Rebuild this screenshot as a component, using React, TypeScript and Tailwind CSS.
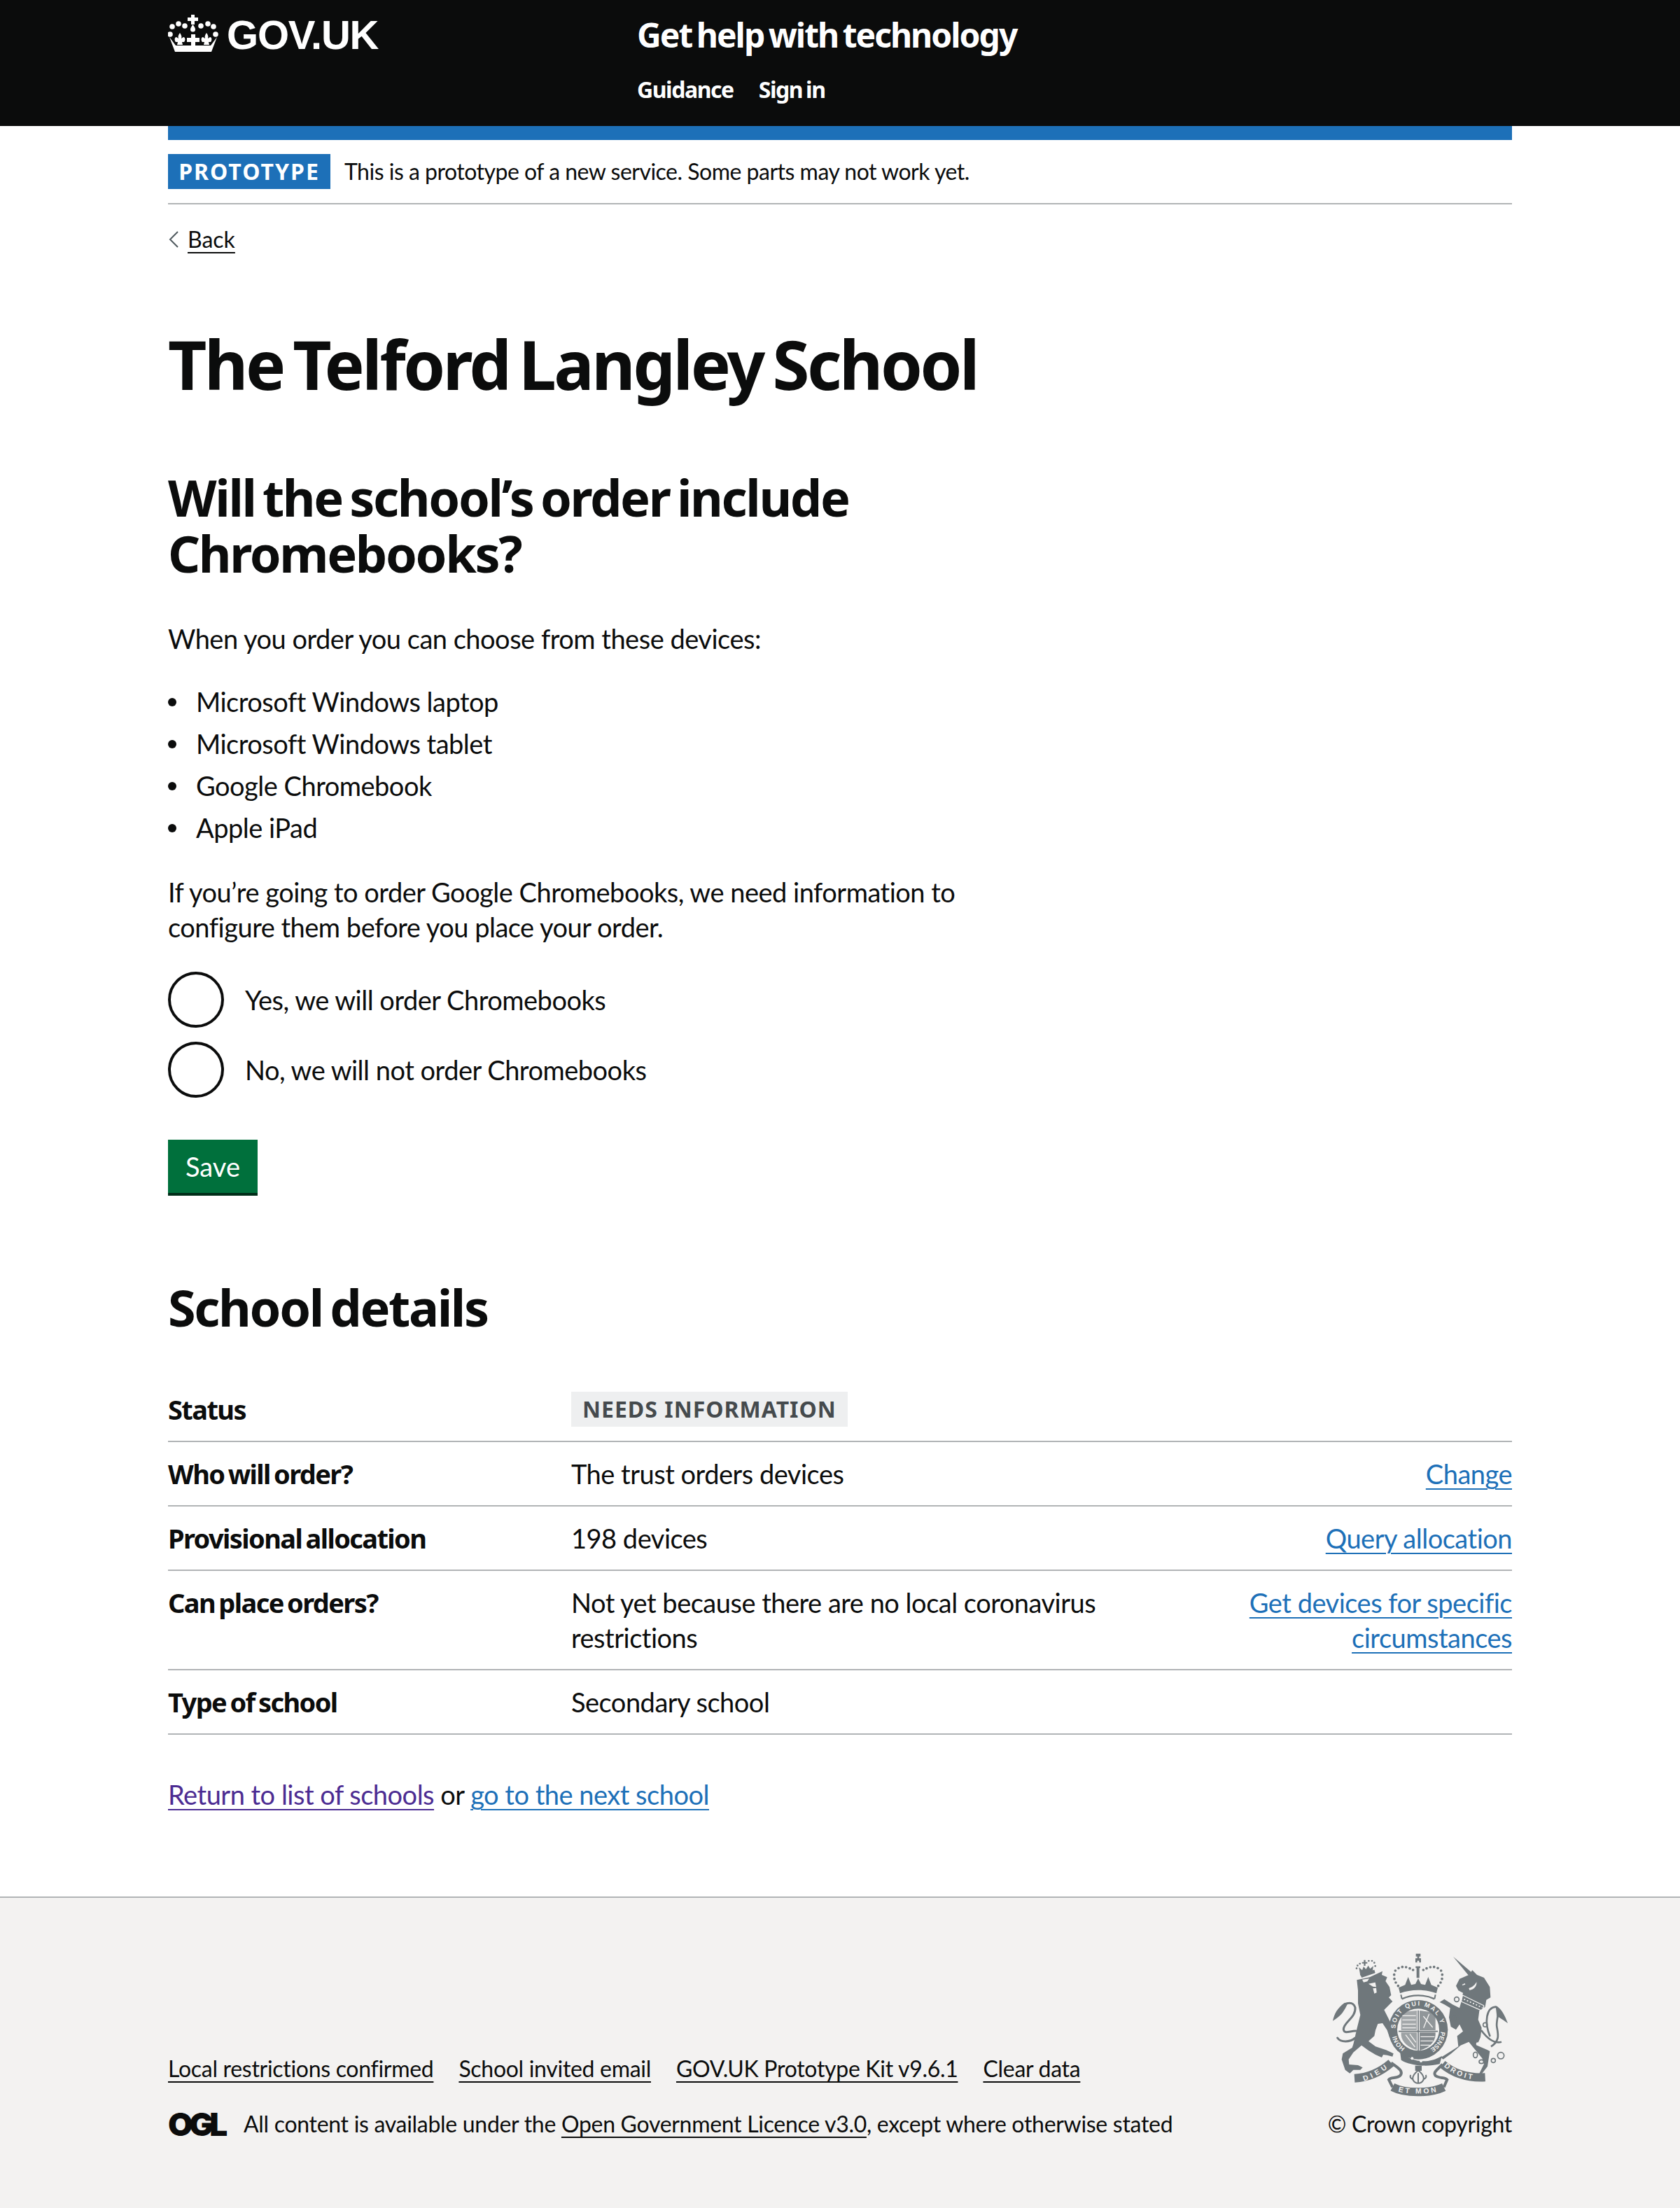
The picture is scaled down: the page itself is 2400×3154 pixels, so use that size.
const heading = "font-['Noto_Sans',sans-serif] font-bold";

function Crown() {
  const dots = [
    [6, 16],
    [15, 12],
    [24, 15],
    [47, 15],
    [57, 12],
    [65, 16],
    [3, 27],
    [68, 27],
  ];
  return (
    <svg width="72" height="53" viewBox="0 -1 72 53" fill="#fff" className="shrink-0">
      {dots.map(([x, y]) => (
        <circle key={`${x}-${y}`} cx={x} cy={y} r="3.8" />
      ))}
      <path d="M33 -1h5v4h5v5h-5v5h-5V8h-5V3h5z" />
      <path d="M35.5 13c2 3 3.5 5 3.5 7a3.5 3.5 0 0 1-7 0c0-2 1.5-4 3.5-7z" />
      {[17, 55].map((x) => (
        <path
          key={x}
          d={`M${x} 25c2 3 3 5 2 8l3-2c3 0 3 5 1 7h-3l1 4h-8l1-4h-3c-2-2-2-7 1-7l3 2c-1-3 0-5 2-8z`}
        />
      ))}
      <path d="M33 27h6v5h6v6h-6v5h-6v-5h-6v-6h6z" />
      <path d="M2 31l6 8 3 4h50l3-4 6-8-8 21H10z" />
    </svg>
  );
}

function Arms() {
  const c = "#6f777b";
  const bg = "#f3f2f1";
  return (
    <svg width="260" height="210" viewBox="0 0 780 630" className="block">
      {/* lion */}
      <path
        fill={c}
        d="M115 130L170 118L225 92L222 108L245 118L238 135L255 160L262 195L252 205L268 222L258 232L232 258L258 310L278 345L285 378L272 392L255 375L245 345L225 315L205 318L195 345L190 370L165 392L195 415L240 430L272 445L268 458L245 452L228 450L222 462L195 450L165 432L135 410L100 440L80 470L82 492L120 495L140 505L130 515L100 515L85 530L65 515L50 470L55 445L95 420L100 405L115 340L130 280L120 230L120 175Z"
      />
      <path fill={bg} d="M138 128L168 124L160 136L144 140ZM165 146L194 140L198 160L184 158ZM184 166L198 164L200 184L190 188Z" />
      <path
        fill="none"
        stroke={c}
        strokeWidth="9"
        strokeLinecap="round"
        d="M108 378C85 398 45 398 32 378M110 348C80 350 58 362 58 340C60 310 112 290 108 248C100 222 70 222 52 248"
      />
      <path fill={c} d="M12 305C18 275 32 250 62 228L78 226C62 262 48 285 12 305Z" />
      {/* lion crown */}
      <path fill={c} d="M128 104L190 86L194 100L136 120Z" />
      <g fill={c}>
        {[[114, 80], [118, 68], [128, 60], [166, 48], [180, 48], [190, 56], [194, 70]].map(([x, y]) => (
          <circle key={`${x}-${y}`} cx={x} cy={y} r="4" />
        ))}
        <path d="M145 44h7v9h8v6h-8v10h-7v-10h-8v-6h8zM124 76l14 12 6-16 10 12 10-16 8 14 14-12-4 22-52 18z" />
      </g>
      {/* everything round the shield, in coords of the wider crop */}
      <g transform="translate(-120 -75)">
        <defs>
          <path id="garter-top" d="M401 413A97 97 0 0 1 595 410" />
          <path id="garter-right" d="M595 426A97 97 0 0 1 539 506" />
          <path id="garter-bot" d="M442 497A97 97 0 0 1 401 426" />
          <path id="ribbon-l" d="M265 638C310 625 345 600 380 572" />
          <path id="ribbon-m" d="M412 682C450 695 540 695 582 682" />
          <path id="ribbon-r" d="M608 575C650 612 700 632 760 632" />
        </defs>
        {/* crown */}
        <path fill={c} d="M488 92h20v12h-6v8h8v18h-8v-8h-8v8h-8v-18h8v-8h-6z" />
        <path fill={c} d="M487 146h20v8h-4v42h-12v-42h-4z" />
        <g fill={c}>
          {[
            [400, 165], [414, 154], [430, 149], [446, 150], [462, 155], [476, 162],
            [395, 182], [396, 200], [402, 216], [412, 230],
            [520, 162], [534, 155], [550, 150], [566, 149], [582, 154], [596, 165],
            [601, 182], [600, 200], [594, 216], [584, 230],
          ].map(([x, y]) => (
            <circle key={`${x}-${y}`} cx={x} cy={y} r="5.5" />
          ))}
        </g>
        <path
          fill={c}
          d="M414 238L442 226L455 192L468 226L486 222L498 198L510 222L528 226L541 192L554 226L582 238L576 262C530 244 466 244 420 262Z"
        />
        <path fill="none" stroke={c} strokeWidth="7" d="M428 286C470 266 526 266 568 286" />
        <path fill="none" stroke={c} strokeWidth="6" d="M424 268L428 286M572 268L568 286" />
        {/* garter */}
        <circle cx="498" cy="418" r="127" fill={c} />
        <circle cx="498" cy="418" r="90" fill={bg} />
        <g fill={bg} fontFamily="Liberation Sans, sans-serif" fontWeight="700" fontSize="27">
          <text>
            <textPath href="#garter-top" textLength="285">SOIT QUI MAL Y</textPath>
          </text>
          <text>
            <textPath href="#garter-right">PENSE</textPath>
          </text>
          <text>
            <textPath href="#garter-bot">HONI</textPath>
          </text>
        </g>
        {/* shield */}
        <path d="M492 345V420H425V345C450 340 470 338 492 336Z" fill={c} opacity=".6" />
        <path d="M504 336C526 338 550 342 572 346V420H504Z" fill={c} opacity=".75" />
        <path d="M425 430H492V505C460 495 428 475 425 440Z" fill={c} opacity=".65" />
        <path d="M504 430H572V440C570 475 540 495 504 508Z" fill={c} opacity=".85" />
        <g stroke={bg} strokeWidth="4">
          <path d="M430 358h58M430 376h58M430 394h58M430 410h58M508 448h60M508 466h54M508 484h40M444 440l40 52M462 436l26 36" />
          <path d="M520 360l40 48M545 350l-24 60" />
        </g>
        <path d="M498 335V520M414 425H582" stroke={c} strokeWidth="5" />
        {/* buckle */}
        <path fill={c} d="M420 510C470 560 540 566 600 530L590 565C530 580 460 570 425 548Z" />
        <circle cx="472" cy="541" r="6" fill={bg} />
        <circle cx="510" cy="552" r="6" fill={bg} />
        {/* motto */}
        <path
          fill="none"
          stroke={c}
          strokeWidth="36"
          d="M225 626C290 622 345 592 382 560M388 664C440 692 550 692 608 664M602 566C650 606 710 626 785 622"
        />
        <path
          fill="none"
          stroke={c}
          strokeWidth="12"
          d="M382 560C410 580 438 596 420 615C405 628 380 620 372 632L388 664M602 566C580 590 560 600 572 615C590 628 612 620 622 632L608 664"
        />
        <g fill={bg} fontFamily="Liberation Sans, sans-serif" fontWeight="700" fontSize="31">
          <text>
            <textPath href="#ribbon-l" textLength="115">DIEU</textPath>
          </text>
          <text>
            <textPath href="#ribbon-m" textLength="165">ET MON</textPath>
          </text>
          <text>
            <textPath href="#ribbon-r" textLength="135">DROIT</textPath>
          </text>
        </g>
        <path fill={c} d="M485 572h28v22h-28z" />
        <path
          fill="none"
          stroke={c}
          strokeWidth="6"
          d="M498 592C512 604 526 622 520 634C510 652 486 652 476 634C470 622 484 604 498 592ZM498 604V650M466 612C460 622 470 632 478 628M530 612C536 622 526 632 518 628"
        />
      </g>
      {/* unicorn */}
      <g transform="translate(390 0)">
        <path fill={c} d="M138 30L218 98L205 112Z" />
        <path
          fill={c}
          d="M150 155L165 125L205 108L220 88L240 108L270 120L295 160L298 205L280 215L275 245L250 262L245 300L260 335L255 375L240 410L285 430L295 435L285 500L262 530L248 535L270 490L262 465L225 420L205 395L170 410L130 445L95 470L85 462L120 440L160 415L155 370L180 350L165 320L150 343L128 330L120 290L125 250L100 235L80 225L100 212L135 235L165 250L175 215L180 185L160 175Z"
        />
        <path fill="none" stroke={bg} strokeWidth="4" d="M178 195L270 240M172 222L262 262M178 195L172 222M270 240L262 262" />
        <path fill="none" stroke={bg} strokeWidth="5" strokeDasharray="6 8" d="M184 212L262 248" />
        <path fill={bg} d="M205 165C222 160 232 150 238 138C240 156 228 170 208 174ZM176 150l12-6 2 5-12 4z" />
        <circle cx="267" cy="369" r="7" fill={bg} />
        <circle cx="243" cy="404" r="7" fill={bg} />
        <g fill="none" stroke={c} strokeWidth="5">
          <circle cx="153" cy="213" r="10" />
          <circle cx="143" cy="297" r="10" />
          <circle cx="275" cy="322" r="9" />
          <ellipse cx="233" cy="451" rx="9" ry="12" />
          <ellipse cx="259" cy="480" rx="10" ry="8" />
          <circle cx="310" cy="475" r="9" />
          <circle cx="342" cy="454" r="14" />
        </g>
        <path
          fill="none"
          stroke={c}
          strokeWidth="8"
          d="M258 345C280 375 310 405 345 395M296 372C270 310 280 248 320 245C345 250 320 300 325 330C330 360 340 390 300 415"
        />
        <path fill={c} d="M320 242C345 248 360 285 372 315C350 300 335 290 325 285Z" />
      </g>
    </svg>
  );
}

function Row({
  label,
  value,
  action,
}: {
  label: string;
  value: React.ReactNode;
  action?: string;
}) {
  return (
    <div className="grid grid-cols-[576px_930px_414px] border-b-2 border-[#b1b4b6] py-[20px] leading-[50px]">
      <div className={`${heading} tracking-[-1.6px] [word-spacing:-3px]`}>{label}</div>
      <div className="pr-[10px]">{value}</div>
      <div className="text-right">
        {action && (
          <a href="#" className="text-[#1d70b8] underline decoration-2 underline-offset-[6px]">
            {action}
          </a>
        )}
      </div>
    </div>
  );
}

export default function App() {
  const footerLink = "underline decoration-2 underline-offset-[6px]";
  return (
    <div className="min-h-[3154px] bg-white font-['Lato',sans-serif] text-[38px] leading-[50px] tracking-[-0.5px] text-[#0b0c0c]">
      <header className="h-[180px] bg-[#0b0c0c] text-white">
        <div className="mx-auto flex w-[1920px]">
          <div className="flex w-[670px] items-start pt-[21px]">
            <Crown />
            <span className="ml-[12px] mt-[-1px] font-['Liberation_Sans',sans-serif] text-[58px] font-bold leading-[60px] tracking-[-1.2px]">
              GOV.UK
            </span>
          </div>
          <div className="pt-[20px]">
            <div className={`${heading} text-[48px] leading-[60px] tracking-[-2px] [word-spacing:-4px]`}>
              Get help with technology
            </div>
            <nav className={`${heading} mt-[28px] flex gap-[36px] text-[32px] leading-[40px] tracking-[-1.45px] [word-spacing:-2px]`}>
              <a href="#">Guidance</a>
              <a href="#">Sign in</a>
            </nav>
          </div>
        </div>
      </header>

      <div className="mx-auto w-[1920px]">
        <div className="h-[20px] bg-[#1d70b8]" />
        <div className="flex items-center gap-[20px] border-b-2 border-[#b1b4b6] py-[20px] text-[32px] tracking-[-0.5px]">
          <strong className={`${heading} flex h-[50px] w-[232px] items-center justify-center bg-[#1d70b8] text-[32px] tracking-[2px] text-white`}>
            PROTOTYPE
          </strong>
          <span>This is a prototype of a new service. Some parts may not work yet.</span>
        </div>

        <a href="#" className="mt-[30px] flex items-center gap-[12px] text-[32px] leading-[40px] tracking-normal">
          <svg width="16" height="26" viewBox="0 0 16 26" fill="none" stroke="#505a5f" strokeWidth="2">
            <path d="M14 2L3 13l11 11" />
          </svg>
          <span className={footerLink}>Back</span>
        </a>

        <h1 className={`${heading} mt-[108px] text-[96px] leading-[100px] tracking-[-3.45px] [word-spacing:-8px]`}>
          The Telford Langley School
        </h1>

        <h2 className={`${heading} mt-[100px] w-[1280px] text-[72px] leading-[80px] tracking-[-2.36px] [word-spacing:-6px]`}>
          Will the school’s order include Chromebooks?
        </h2>

        <p className="mt-[57px]">When you order you can choose from these devices:</p>

        <ul className="mt-[40px] flex flex-col gap-[10px] pl-[40px]">
          {["Microsoft Windows laptop", "Microsoft Windows tablet", "Google Chromebook", "Apple iPad"].map((d) => (
            <li key={d} className="relative">
              <span className="absolute left-[-40px] top-[20px] size-[12px] rounded-full bg-[#0b0c0c]" />
              {d}
            </li>
          ))}
        </ul>

        <p className="mt-[42px] w-[1280px]">
          If you’re going to order Google Chromebooks, we need information to configure them before you place your order.
        </p>

        <div className="mt-[39px] flex flex-col gap-[20px]">
          {["Yes, we will order Chromebooks", "No, we will not order Chromebooks"].map((o) => (
            <label key={o} className="flex items-center gap-[30px]">
              <span className="size-[80px] rounded-full border-4 border-[#0b0c0c] bg-white" />
              {o}
            </label>
          ))}
        </div>

        <button className="mt-[60px] block h-[80px] w-[128px] bg-[#00703c] pb-[4px] text-center tracking-normal text-white shadow-[inset_0_-4px_0_#002d18]">
          Save
        </button>

        <h2 className={`${heading} mt-[119px] text-[72px] leading-[80px] tracking-[-2.36px] [word-spacing:-6px]`}>
          School details
        </h2>

        <div className="mt-[61px]">
          <Row
            label="Status"
            value={
              <span className={`${heading} flex h-[50px] w-fit items-center bg-[#eeeff0] px-[16px] text-[32px] tracking-[1px] text-[#454a4d]`}>
                NEEDS INFORMATION
              </span>
            }
          />
          <Row label="Who will order?" value="The trust orders devices" action="Change" />
          <Row label="Provisional allocation" value="198 devices" action="Query allocation" />
          <Row
            label="Can place orders?"
            value="Not yet because there are no local coronavirus restrictions"
            action="Get devices for specific circumstances"
          />
          <Row label="Type of school" value="Secondary school" />
        </div>

        <p className="mt-[60px]">
          <a href="#" className="text-[#4c2c92] underline decoration-2 underline-offset-[6px]">
            Return to list of schools
          </a>{" "}
          or{" "}
          <a href="#" className="text-[#1d70b8] underline decoration-2 underline-offset-[6px]">
            go to the next school
          </a>
        </p>
      </div>

      <footer className="mt-[121px] h-[445px] border-t-2 border-[#b1b4b6] bg-[#f3f2f1] text-[32px] leading-[40px] tracking-[-0.3px]">
        <div className="mx-auto flex w-[1920px] items-end justify-between pt-[74px]">
          <div>
            <div className="flex gap-[36px]">
              <a href="#" className={footerLink}>Local restrictions confirmed</a>
              <a href="#" className={footerLink}>School invited email</a>
              <a href="#" className={footerLink}>GOV.UK Prototype Kit v9.6.1</a>
              <a href="#" className={footerLink}>Clear data</a>
            </div>
            <div className="mt-[39px] flex items-center">
              <span className="w-[108px] font-['Inter',sans-serif] text-[46px] font-black leading-[40px] tracking-[-5.5px]">
                OGL
              </span>
              <span>
                All content is available under the{" "}
                <a href="#" className={footerLink}>Open Government Licence v3.0</a>, except where otherwise stated
              </span>
            </div>
          </div>
          <div className="flex flex-col items-end">
            <Arms />
            <a href="#" className="mt-[19px]">© Crown copyright</a>
          </div>
        </div>
      </footer>
    </div>
  );
}
